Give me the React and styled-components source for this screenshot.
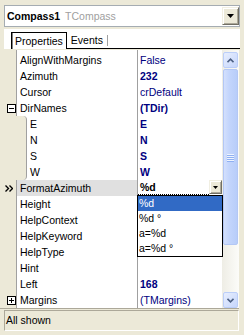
import React from "react";
import styled, { createGlobalStyle } from "styled-components";

const GlobalStyle = createGlobalStyle`
  html, body {
    margin: 0;
    padding: 0;
    background: #ECE9D8;
  }
  body {
    font-family: "Liberation Sans", Arial, sans-serif;
    font-size: 10.5px;
    color: #000;
  }
`;

const properties = [
  { name: "AlignWithMargins", value: "False" },
  { name: "Azimuth", value: "232", bold: true },
  { name: "Cursor", value: "crDefault" },
  { name: "DirNames", value: "(TDir)", bold: true, expand: "minus" },
  { name: "E", value: "E", bold: true, sub: true, first: true },
  { name: "N", value: "N", bold: true, sub: true },
  { name: "S", value: "S", bold: true, sub: true },
  { name: "W", value: "W", bold: true, sub: true, last: true },
  { name: "FormatAzimuth", value: "%d", selected: true },
  { name: "Height" },
  { name: "HelpContext" },
  { name: "HelpKeyword" },
  { name: "HelpType" },
  { name: "Hint" },
  { name: "Left", value: "168", bold: true },
  { name: "Margins", value: "(TMargins)", expand: "plus" },
];

const formats = ["%d", "%d °", "a=%d", "a=%d °"];

const App = () => {
  return (
    <>
      <GlobalStyle />
      <Window>
        <Combo>
          <ComboText>
            <b>Compass1</b>
            <ClassName>TCompass</ClassName>
          </ComboText>
          <DropButton $w={17} $h={18}>
            <svg width="7" height="4" viewBox="0 0 7 4">
              <polygon points="0,0 7,0 3.5,4" fill="#000" />
            </svg>
          </DropButton>
        </Combo>

        <TabStrip>
          <Tab $active>Properties</Tab>
          <Tab>
            Events
            <TabSep />
          </Tab>
          <TabFiller />
        </TabStrip>

        <Grid>
          <Rows>
            {properties.map((p) => (
              <Row key={p.name} $selected={p.selected}>
                <Gutter $sub={p.sub} $first={p.first} $last={p.last} $marker={p.selected}>
                  {p.expand && <ExpandBox type={p.expand} />}
                  {p.selected && (
                    <svg width="8" height="7" viewBox="0 0 8 7">
                      <polyline points="0.5,0.5 3.5,3.5 0.5,6.5" fill="none" stroke="#000" strokeWidth="1.4" />
                      <polyline points="4.5,0.5 7.5,3.5 4.5,6.5" fill="none" stroke="#000" strokeWidth="1.4" />
                    </svg>
                  )}
                </Gutter>
                <Name $sub={p.sub} $selected={p.selected}>{p.name}</Name>
                {p.selected ? (
                  <Value $edit>
                    <EditText>{p.value}</EditText>
                    <DropButton $w={13} $h={14}>
                      <svg width="5" height="3" viewBox="0 0 5 3">
                        <polygon points="0,0 5,0 2.5,3" fill="#000" />
                      </svg>
                    </DropButton>
                    <DropList>
                      {formats.map((f, i) => (
                        <DropItem key={f} $active={i === 0}>{f}</DropItem>
                      ))}
                    </DropList>
                  </Value>
                ) : (
                  <Value $bold={p.bold}>{p.value}</Value>
                )}
              </Row>
            ))}
          </Rows>
          <ScrollBar>
            <ScrollButton>
              <svg width="7" height="5" viewBox="0 0 7 5">
                <polyline points="0.5,4.2 3.5,1.2 6.5,4.2" fill="none" stroke="#4D6185" strokeWidth="1.6" />
              </svg>
            </ScrollButton>
            <Thumb>
              <Gripper>
                <span />
                <span />
                <span />
                <span />
              </Gripper>
            </Thumb>
            <Track />
            <ScrollButton>
              <svg width="7" height="5" viewBox="0 0 7 5">
                <polyline points="0.5,0.8 3.5,3.8 6.5,0.8" fill="none" stroke="#4D6185" strokeWidth="1.6" />
              </svg>
            </ScrollButton>
          </ScrollBar>
        </Grid>

        <StatusBar>All shown</StatusBar>
      </Window>
    </>
  );
};
export default App;

const ExpandBox = ({ type }) => (
  <svg width="9" height="9" viewBox="0 0 9 9">
    <rect x="0.5" y="0.5" width="8" height="8" fill="#fff" stroke="#000" />
    <line x1="2" y1="4.5" x2="7" y2="4.5" stroke="#000" />
    {type === "plus" && <line x1="4.5" y1="2" x2="4.5" y2="7" stroke="#000" />}
  </svg>
);

const Window = styled.div`
  width: 244px;
  height: 335px;
  display: flex;
  flex-direction: column;
  overflow: hidden;
  background: #ECE9D8;
`;

const Combo = styled.div`
  margin: 5px 4px 0 4px;
  height: 22px;
  box-sizing: border-box;
  border: 1px solid #A5ACB2;
  background: #fff;
  display: flex;
  align-items: center;
  padding: 0 0 0 2px;
`;

const ComboText = styled.div`
  flex: 1;
  white-space: nowrap;
  b {
    font-weight: bold;
  }
`;

const ClassName = styled.span`
  color: #A0A0A0;
  margin-left: 5px;
`;

const DropButton = styled.div`
  width: ${(p) => p.$w}px;
  height: ${(p) => p.$h}px;
  flex-shrink: 0;
  box-sizing: border-box;
  background: #ECE9D8;
  border: 1px solid;
  border-color: #F1EFE2 #716F64 #716F64 #F1EFE2;
  box-shadow: inset 1px 1px #fff, inset -1px -1px #ACA899;
  display: flex;
  align-items: center;
  justify-content: center;
`;

const TabStrip = styled.div`
  margin: 2px 4px 0 4px;
  height: 20px;
  box-sizing: border-box;
  background: #fff;
  display: flex;
  align-items: flex-end;
  padding-left: 7px;
`;

const Tab = styled.div`
  height: 17px;
  box-sizing: border-box;
  display: flex;
  align-items: center;
  white-space: nowrap;
  padding: ${(p) => (p.$active ? "0 3px 0 3px" : "0 0 0 4px")};
  border: ${(p) => (p.$active ? "1px solid #000" : "none")};
  border-bottom: ${(p) => (p.$active ? "none" : "1px solid #000")};
  box-shadow: ${(p) => (p.$active ? "inset 1px 0 #808080" : "none")};
`;

const TabSep = styled.span`
  width: 1px;
  height: 11px;
  background: #A0A0A0;
  margin-left: 4px;
`;

const TabFiller = styled.div`
  flex: 1;
  height: 17px;
  box-sizing: border-box;
  border-bottom: 1px solid #000;
`;

const Grid = styled.div`
  margin: 1px 5px 0 0;
  height: 259px;
  box-sizing: border-box;
  display: flex;
  border-bottom: 1px solid #ACA899;
`;

const Rows = styled.div`
  flex: 1;
  padding-top: 2px;
  background: linear-gradient(
    to right,
    #ECE9D8 0 16px,
    #A0A0A0 16px 17px,
    #fff 17px 137px,
    #A0A0A0 137px 138px,
    #fff 138px
  );
`;

const Row = styled.div`
  display: flex;
  height: 16px;
  line-height: 16px;
  background: ${(p) => (p.$selected ? "#E0E0E0" : "#fff")};
  white-space: nowrap;
`;

const Gutter = styled.div`
  width: ${(p) => (p.$sub ? 27 : 17)}px;
  flex-shrink: 0;
  box-sizing: border-box;
  background: #ECE9D8;
  border-right: 1px solid #A0A0A0;
  border-top-right-radius: ${(p) => (p.$first ? "4px" : "0")};
  border-bottom-right-radius: ${(p) => (p.$last ? "4px" : "0")};
  display: flex;
  align-items: center;
  justify-content: ${(p) => (p.$marker ? "flex-start" : "flex-end")};
  padding-left: ${(p) => (p.$marker ? "5px" : "0")};
`;

const Name = styled.div`
  width: ${(p) => (p.$sub ? 110 : 120)}px;
  flex-shrink: 0;
  box-sizing: border-box;
  padding-left: 3px;
  overflow: hidden;
  background: ${(p) => (p.$selected ? "#E0E0E0" : "#fff")};
`;

const Value = styled.div`
  flex: 1;
  min-width: 0;
  position: relative;
  display: flex;
  box-sizing: border-box;
  border-left: 1px solid #A0A0A0;
  padding-left: ${(p) => (p.$edit ? "0" : "2px")};
  background: #fff;
  color: #000080;
  font-weight: ${(p) => (p.$bold ? "bold" : "normal")};
`;

const EditText = styled.div`
  flex: 1;
  height: 15px;
  line-height: 15px;
  box-sizing: border-box;
  padding-left: 2px;
  color: #000;
  font-weight: bold;
  border-bottom: 1px dotted #000;
`;

const DropList = styled.div`
  position: absolute;
  top: 15px;
  left: -1px;
  width: 86px;
  box-sizing: border-box;
  border: 1px solid #000;
  background: #fff;
  z-index: 2;
`;

const DropItem = styled.div`
  height: 15px;
  line-height: 15px;
  padding-left: 1px;
  color: ${(p) => (p.$active ? "#fff" : "#000")};
  background: ${(p) => (p.$active ? "#316AC5" : "#fff")};
  font-weight: normal;
`;

const ScrollBar = styled.div`
  width: 17px;
  flex-shrink: 0;
  box-sizing: border-box;
  padding: 2px 1px 0 1px;
  display: flex;
  flex-direction: column;
  background: linear-gradient(to right, #EEEDE5, #FCFCF9);
`;

const ScrollButton = styled.div`
  height: 16px;
  box-sizing: border-box;
  border: 1px solid #BBCEF9;
  border-radius: 2px;
  background: linear-gradient(to bottom right, #E7EEFE, #C6D6FC);
  display: flex;
  align-items: center;
  justify-content: center;
`;

const Thumb = styled.div`
  height: 176px;
  margin-top: 1px;
  box-sizing: border-box;
  border: 1px solid #B3C7F5;
  border-radius: 2px;
  background: linear-gradient(to right, #D3E0FD, #C3D5FC 40%, #B8CDF9);
  display: flex;
  align-items: center;
  justify-content: center;
`;

const Gripper = styled.div`
  display: flex;
  flex-direction: column;
  gap: 1px;
  span {
    display: block;
    width: 7px;
    height: 1px;
    background: #EEF4FE;
    box-shadow: 0 1px #8FB0F2;
  }
`;

const Track = styled.div`
  flex: 1;
`;

const StatusBar = styled.div`
  margin: 1px 5px 0 4px;
  height: 21px;
  box-sizing: border-box;
  border: 1px solid;
  border-color: #ACA899 #fff #fff #ACA899;
  padding-left: 1px;
  line-height: 19px;
  white-space: nowrap;
`;
